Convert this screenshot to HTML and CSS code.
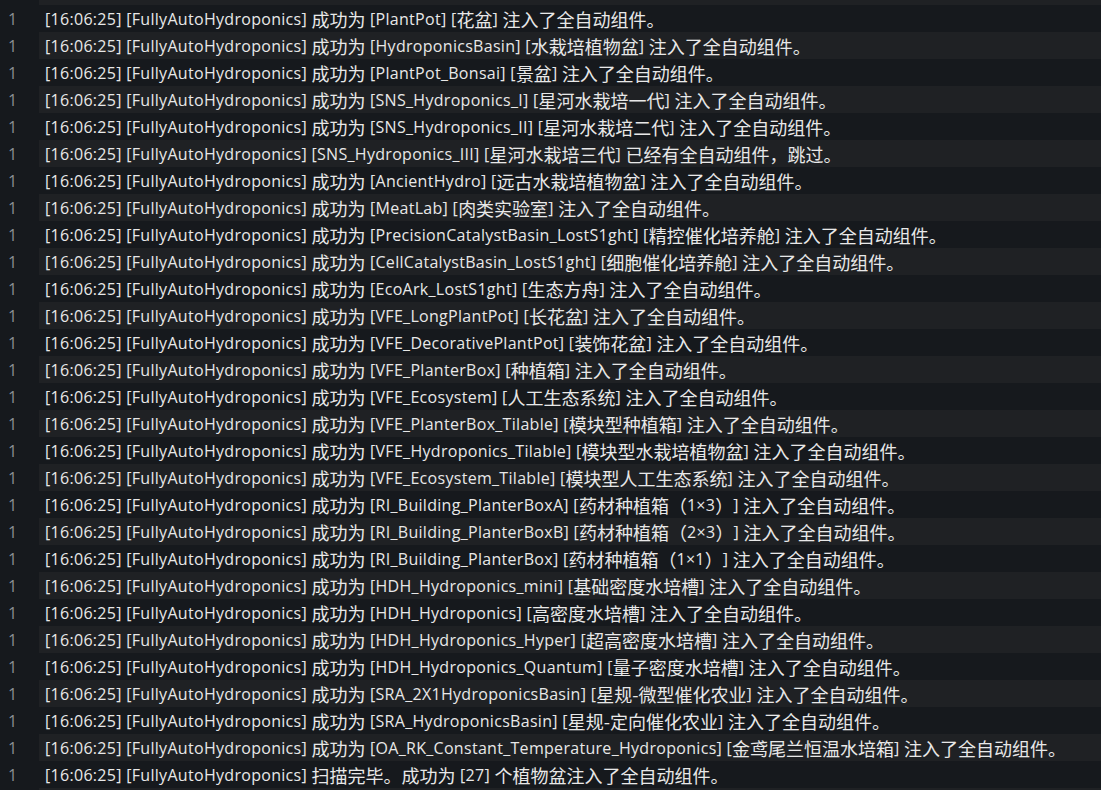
FILE: index.html
```html
<!DOCTYPE html>
<html lang="zh-CN">
<head>
<meta charset="utf-8">
<title>Log</title>
<link rel="stylesheet" href="styles.css">
</head>
<body>
<div class="log">
  <div class="row stub top"><span class="ln"></span><span class="msg"></span></div>
  <div class="row"><span class="ln">1</span><span class="msg">[16:06:25] [FullyAutoHydroponics] <i>成功为</i> [PlantPot] [<i>花盆</i>] <i>注入了全自动组件。</i></span></div>
  <div class="row"><span class="ln">1</span><span class="msg">[16:06:25] [FullyAutoHydroponics] <i>成功为</i> [HydroponicsBasin] [<i>水栽培植物盆</i>] <i>注入了全自动组件。</i></span></div>
  <div class="row"><span class="ln">1</span><span class="msg">[16:06:25] [FullyAutoHydroponics] <i>成功为</i> [PlantPot_Bonsai] [<i>景盆</i>] <i>注入了全自动组件。</i></span></div>
  <div class="row"><span class="ln">1</span><span class="msg">[16:06:25] [FullyAutoHydroponics] <i>成功为</i> [SNS_Hydroponics_I] [<i>星河水栽培一代</i>] <i>注入了全自动组件。</i></span></div>
  <div class="row"><span class="ln">1</span><span class="msg">[16:06:25] [FullyAutoHydroponics] <i>成功为</i> [SNS_Hydroponics_II] [<i>星河水栽培二代</i>] <i>注入了全自动组件。</i></span></div>
  <div class="row"><span class="ln">1</span><span class="msg">[16:06:25] [FullyAutoHydroponics] [SNS_Hydroponics_III] [<i>星河水栽培三代</i>] <i>已经有全自动组件，跳过。</i></span></div>
  <div class="row"><span class="ln">1</span><span class="msg">[16:06:25] [FullyAutoHydroponics] <i>成功为</i> [AncientHydro] [<i>远古水栽培植物盆</i>] <i>注入了全自动组件。</i></span></div>
  <div class="row"><span class="ln">1</span><span class="msg">[16:06:25] [FullyAutoHydroponics] <i>成功为</i> [MeatLab] [<i>肉类实验室</i>] <i>注入了全自动组件。</i></span></div>
  <div class="row"><span class="ln">1</span><span class="msg">[16:06:25] [FullyAutoHydroponics] <i>成功为</i> [PrecisionCatalystBasin_LostS1ght] [<i>精控催化培养舱</i>] <i>注入了全自动组件。</i></span></div>
  <div class="row"><span class="ln">1</span><span class="msg">[16:06:25] [FullyAutoHydroponics] <i>成功为</i> [CellCatalystBasin_LostS1ght] [<i>细胞催化培养舱</i>] <i>注入了全自动组件。</i></span></div>
  <div class="row"><span class="ln">1</span><span class="msg">[16:06:25] [FullyAutoHydroponics] <i>成功为</i> [EcoArk_LostS1ght] [<i>生态方舟</i>] <i>注入了全自动组件。</i></span></div>
  <div class="row"><span class="ln">1</span><span class="msg">[16:06:25] [FullyAutoHydroponics] <i>成功为</i> [VFE_LongPlantPot] [<i>长花盆</i>] <i>注入了全自动组件。</i></span></div>
  <div class="row"><span class="ln">1</span><span class="msg">[16:06:25] [FullyAutoHydroponics] <i>成功为</i> [VFE_DecorativePlantPot] [<i>装饰花盆</i>] <i>注入了全自动组件。</i></span></div>
  <div class="row"><span class="ln">1</span><span class="msg">[16:06:25] [FullyAutoHydroponics] <i>成功为</i> [VFE_PlanterBox] [<i>种植箱</i>] <i>注入了全自动组件。</i></span></div>
  <div class="row"><span class="ln">1</span><span class="msg">[16:06:25] [FullyAutoHydroponics] <i>成功为</i> [VFE_Ecosystem] [<i>人工生态系统</i>] <i>注入了全自动组件。</i></span></div>
  <div class="row"><span class="ln">1</span><span class="msg">[16:06:25] [FullyAutoHydroponics] <i>成功为</i> [VFE_PlanterBox_Tilable] [<i>模块型种植箱</i>] <i>注入了全自动组件。</i></span></div>
  <div class="row"><span class="ln">1</span><span class="msg">[16:06:25] [FullyAutoHydroponics] <i>成功为</i> [VFE_Hydroponics_Tilable] [<i>模块型水栽培植物盆</i>] <i>注入了全自动组件。</i></span></div>
  <div class="row"><span class="ln">1</span><span class="msg">[16:06:25] [FullyAutoHydroponics] <i>成功为</i> [VFE_Ecosystem_Tilable] [<i>模块型人工生态系统</i>] <i>注入了全自动组件。</i></span></div>
  <div class="row"><span class="ln">1</span><span class="msg">[16:06:25] [FullyAutoHydroponics] <i>成功为</i> [RI_Building_PlanterBoxA] [<i>药材种植箱（</i>1×3<i>）</i>] <i>注入了全自动组件。</i></span></div>
  <div class="row"><span class="ln">1</span><span class="msg">[16:06:25] [FullyAutoHydroponics] <i>成功为</i> [RI_Building_PlanterBoxB] [<i>药材种植箱（</i>2×3<i>）</i>] <i>注入了全自动组件。</i></span></div>
  <div class="row"><span class="ln">1</span><span class="msg">[16:06:25] [FullyAutoHydroponics] <i>成功为</i> [RI_Building_PlanterBox] [<i>药材种植箱（</i>1×1<i>）</i>] <i>注入了全自动组件。</i></span></div>
  <div class="row"><span class="ln">1</span><span class="msg">[16:06:25] [FullyAutoHydroponics] <i>成功为</i> [HDH_Hydroponics_mini] [<i>基础密度水培槽</i>] <i>注入了全自动组件。</i></span></div>
  <div class="row"><span class="ln">1</span><span class="msg">[16:06:25] [FullyAutoHydroponics] <i>成功为</i> [HDH_Hydroponics] [<i>高密度水培槽</i>] <i>注入了全自动组件。</i></span></div>
  <div class="row"><span class="ln">1</span><span class="msg">[16:06:25] [FullyAutoHydroponics] <i>成功为</i> [HDH_Hydroponics_Hyper] [<i>超高密度水培槽</i>] <i>注入了全自动组件。</i></span></div>
  <div class="row"><span class="ln">1</span><span class="msg">[16:06:25] [FullyAutoHydroponics] <i>成功为</i> [HDH_Hydroponics_Quantum] [<i>量子密度水培槽</i>] <i>注入了全自动组件。</i></span></div>
  <div class="row"><span class="ln">1</span><span class="msg">[16:06:25] [FullyAutoHydroponics] <i>成功为</i> [SRA_2X1HydroponicsBasin] [<i>星规-微型催化农业</i>] <i>注入了全自动组件。</i></span></div>
  <div class="row"><span class="ln">1</span><span class="msg">[16:06:25] [FullyAutoHydroponics] <i>成功为</i> [SRA_HydroponicsBasin] [<i>星规-定向催化农业</i>] <i>注入了全自动组件。</i></span></div>
  <div class="row"><span class="ln">1</span><span class="msg">[16:06:25] [FullyAutoHydroponics] <i>成功为</i> [OA_RK_Constant_Temperature_Hydroponics] [<i>金鸢尾兰恒温水培箱</i>] <i>注入了全自动组件。</i></span></div>
  <div class="row"><span class="ln">1</span><span class="msg">[16:06:25] [FullyAutoHydroponics] <i>扫描完毕。成功为</i> [27] <i>个植物盆注入了全自动组件。</i></span></div>
  <div class="row stub bottom"><span class="ln"></span><span class="msg"></span></div>
</div>
</body>
</html>
```

FILE: styles.css
```css
html, body {
  margin: 0;
  padding: 0;
  background: #16191d;
  height: 100%;
  overflow: hidden;
}
.log {
  display: flex;
  flex-direction: column;
  font-family: "Open Sans", "Noto Sans CJK SC", sans-serif;
  font-size: 16px;
  letter-spacing: 0.3px;
  color: #e8e8e8;
}
.row {
  display: grid;
  grid-template-columns: 39px 1fr;
  height: 27px;
  align-items: stretch;
}
.ln {
  display: flex;
  align-items: center;
  padding-left: 8px;
  color: #8b8e92;
  background: #16191d;
}
.msg {
  display: flex;
  align-items: center;
  padding-left: 6px;
  white-space: pre;
  background: #16191d;
}
.msg i {
  font-style: normal;
  font-family: "Noto Sans CJK SC", sans-serif;
  font-size: 18px;
  letter-spacing: 0;
}
.row:nth-child(odd) .msg {
  background: #1f2124;
}
.stub.top { height: 5px; }
.stub.bottom { height: 2px; }
```
